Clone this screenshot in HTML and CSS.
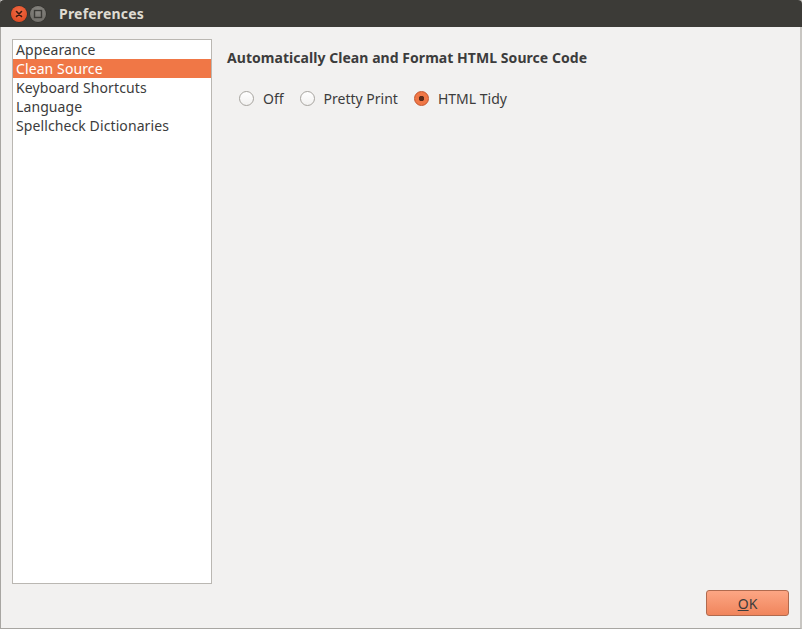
FILE: index.html
```html
<!DOCTYPE html>
<html>
<head>
<meta charset="utf-8">
<link rel="stylesheet" href="styles.css">
</head>
<body>
<div class="window">
  <div class="titlebar">
    <div class="controls">
      <span class="btn close">
        <svg width="16" height="16" viewBox="0 0 16 16"><path d="M5.5 5.5 L10.5 10.5 M10.5 5.5 L5.5 10.5" stroke="#3a1a10" stroke-width="1.6" stroke-linecap="round"/></svg>
      </span>
      <span class="btn minimize">
        <svg width="16" height="16" viewBox="0 0 16 16"><rect x="4.5" y="4.5" width="7" height="7" fill="none" stroke="#3c3b37" stroke-width="1.4"/></svg>
      </span>
    </div>
    <div class="title">Preferences</div>
  </div>
  <div class="body">
    <div class="content">
      <ul class="list">
        <li class="item">Appearance</li>
        <li class="item selected">Clean Source</li>
        <li class="item">Keyboard Shortcuts</li>
        <li class="item">Language</li>
        <li class="item">Spellcheck Dictionaries</li>
      </ul>
      <div class="panel">
        <div class="heading">Automatically Clean and Format HTML Source Code</div>
        <div class="radios">
          <label class="radio"><span class="dot"></span>Off</label>
          <label class="radio"><span class="dot"></span>Pretty Print</label>
          <label class="radio"><span class="dot checked"></span>HTML Tidy</label>
        </div>
      </div>
    </div>
    <div class="footer">
      <button class="ok"><u>O</u>K</button>
    </div>
  </div>
</div>
</body>
</html>
```
FILE: styles.css
```css
html, body {
  margin: 0;
  padding: 0;
  background: #f2f1f0;
}
body {
  font-family: "Noto Sans", "DejaVu Sans", sans-serif;
  font-size: 14px;
  color: #3c3c3c;
}
.window {
  width: 802px;
  height: 629px;
  box-sizing: border-box;
  display: flex;
  flex-direction: column;
  border-left: 1px solid #a8a6a2;
  border-right: 2px solid #c8c6c2;
  border-bottom: 1px solid #a8a6a2;
  background: #f2f1f0;
}
.titlebar {
  height: 27px;
  flex: none;
  background: #3c3b37;
  display: flex;
  align-items: center;
  margin: 0 -2px 0 -1px;
  border-radius: 4px 4px 0 0;
}
.controls {
  display: flex;
  gap: 3px;
  padding-left: 11px;
}
.btn {
  width: 16px;
  height: 16px;
  border-radius: 50%;
  display: flex;
}
.close {
  background: radial-gradient(circle at 50% 35%, #f26b45, #d9441c);
  box-shadow: 0 0 0 0.5px #2a2926;
}
.minimize {
  background: radial-gradient(circle at 50% 35%, #8a8883, #6a6863);
  box-shadow: 0 0 0 0.5px #2a2926;
}
.title {
  margin-left: 13px;
  color: #dfdbd2;
  font-weight: bold;
  font-size: 14px;
  letter-spacing: 0.2px;
}
.body {
  flex: 1;
  display: flex;
  flex-direction: column;
  padding: 12px 11px 12px 11px;
}
.content {
  flex: 1;
  display: flex;
  gap: 15px;
}
.list {
  list-style: none;
  margin: 0;
  padding: 0;
  width: 198px;
  height: 543px;
  background: #ffffff;
  border: 1px solid #bab7b2;
  box-sizing: content-box;
}
.item {
  height: 19px;
  line-height: 20px;
  padding-left: 3px;
  color: #3c3c3c;
  white-space: nowrap;
  font-size: 14px;
  letter-spacing: 0.1px;
}
.item.selected {
  background: #f07746;
  color: #ffffff;
}
.panel {
  flex: 1;
  padding-top: 9px;
}
.heading {
  font-weight: bold;
  font-size: 14px;
  letter-spacing: 0.05px;
  color: #3c3c3c;
  height: 20px;
  line-height: 20px;
}
.radios {
  display: flex;
  gap: 16px;
  padding-left: 12px;
  margin-top: 21px;
}
.radio {
  display: flex;
  align-items: center;
  gap: 9px;
  font-size: 14px;
  color: #3c3c3c;
}
.dot {
  width: 15px;
  height: 15px;
  border-radius: 50%;
  box-sizing: border-box;
  border: 1px solid #a7a49f;
  background: linear-gradient(#ffffff, #f2f1f0);
  display: inline-block;
}
.dot.checked {
  border-color: #c4532a;
  background: radial-gradient(circle, #5a2a18 0 2.5px, #f07746 3px);
}
.footer {
  display: flex;
  justify-content: flex-end;
  margin-top: 6px;
}
.ok {
  width: 83px;
  height: 26px;
  border: 1px solid #b06a4e;
  border-radius: 3px;
  background: linear-gradient(#fca684, #f0855c);
  font-family: "Noto Sans", "DejaVu Sans", sans-serif;
  font-size: 14px;
  color: #3c3c3c;
  padding: 0;
}
.ok u {
  text-decoration-thickness: 1px;
}
```
